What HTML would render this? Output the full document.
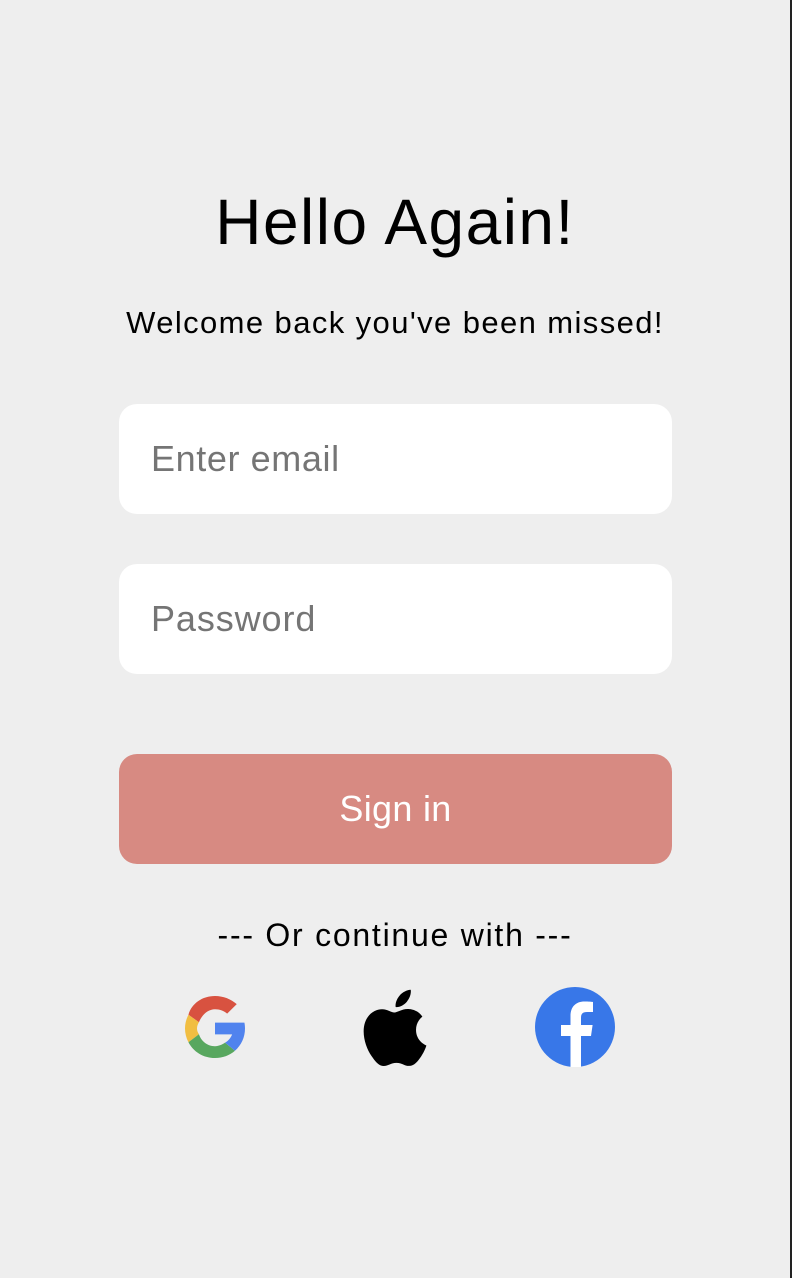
<!DOCTYPE html>
<html><head><style>
html,body{margin:0;padding:0}
body{width:792px;height:1278px;background:#eeeeee;position:relative;overflow:hidden;font-family:"Liberation Sans",Arial,sans-serif}
.edge{position:absolute;right:0;top:0;width:2px;height:1278px;background:#222}
.t{position:absolute;left:0;width:790px;text-align:center;color:#000}
.in{position:absolute;left:119px;width:553px;height:110px;background:#fff;border-radius:18px}
.in span{position:absolute;left:32px;top:34px;font-size:36px;color:#757575}
.btn{position:absolute;left:119px;top:754px;width:553px;height:110px;background:#d78a82;border-radius:18px;color:#fff;font-size:36px;text-align:center;line-height:110px;letter-spacing:0.3px}
</style></head><body>
<div class="edge"></div>
<div class="t" style="top:184px;font-size:64px;line-height:76px;letter-spacing:1.5px">Hello Again!</div>
<div class="t" style="top:304px;font-size:31px;line-height:38px;letter-spacing:1.4px">Welcome back you've been missed!</div>
<div class="in" style="top:404px"><span style="letter-spacing:0.6px">Enter email</span></div>
<div class="in" style="top:564px"><span style="letter-spacing:0.9px">Password</span></div>
<div class="btn">Sign in</div>
<div class="t" style="top:916px;font-size:32px;line-height:38px;letter-spacing:1.75px">--- Or continue with ---</div>
<svg style="position:absolute;left:185px;top:996px" width="60" height="62" viewBox="4 2 40 42" preserveAspectRatio="none">
<path fill="#d85240" d="M6.3 14.7l7 5.1C15.1 15 19.2 11 24 11c3.1 0 5.9 1.1 8.1 2.9l6.4-6.4C34.6 4.1 29.6 2 24 2 15.6 2 8.4 7 6.3 14.7z"/>
<path fill="#f1be42" d="M6.3 14.7C4.8 17.6 4 20.8 4 24s.8 6.4 2.3 9.3l7-5.4C12.5 26.7 12 25.4 12 24s.5-2.9 1.3-4.2z"/>
<path fill="#58a75f" d="M24 44c5.2 0 9.9-1.8 13.3-4.9l-6.6-5.5C28.8 34.9 26.5 36 24 36c-5 0-9.2-3.3-10.7-8.1l-7 5.4C9.6 39.8 16.3 44 24 44z"/>
<path fill="#5083ee" d="M44 20H24v8h11.4c-.8 2.300-2.3 4.2-4.7 5.6l6.6 5.5C41.5 35.3 44 30 44 24c0-1.3-.1-2.7-.4-4z"/>
</svg>
<svg style="position:absolute;left:362px;top:989px" width="66" height="77" viewBox="0 0 814 1000">
<path fill="#000" d="M788 341c-6 4-108 62-108 190 0 149 131 202 135 203-1 3-21 72-69 142-43 62-88 123-156 123s-86-40-164-40c-77 0-104 41-167 41s-106-57-156-128C45 790 0 667 0 550c0-188 122-287 242-287 64 0 117 42 157 42 38 0 98-45 171-45 28 0 127 3 192 98zM561 165c30-36 52-86 52-135 0-7-1-14-2-20-49 2-108 33-143 74-28 32-54 82-54 132 0 8 1 15 2 18 3 1 8 1 13 1 44 0 100-30 132-70z"/>
</svg>
<svg style="position:absolute;left:535px;top:987px" width="80" height="80" viewBox="0 0 80 80">
<circle cx="40" cy="40" r="40" fill="#3877e8"/>
<path fill="#fff" d="M46 80V49h10l1.6-11H46v-7c0-3.5 1-6 6-6h6V15c-1-.2-4.5-.5-8.5-.5-8.5 0-14 5-14 14.5V38H26v11h9.5v31z"/>
</svg>
</body></html>
